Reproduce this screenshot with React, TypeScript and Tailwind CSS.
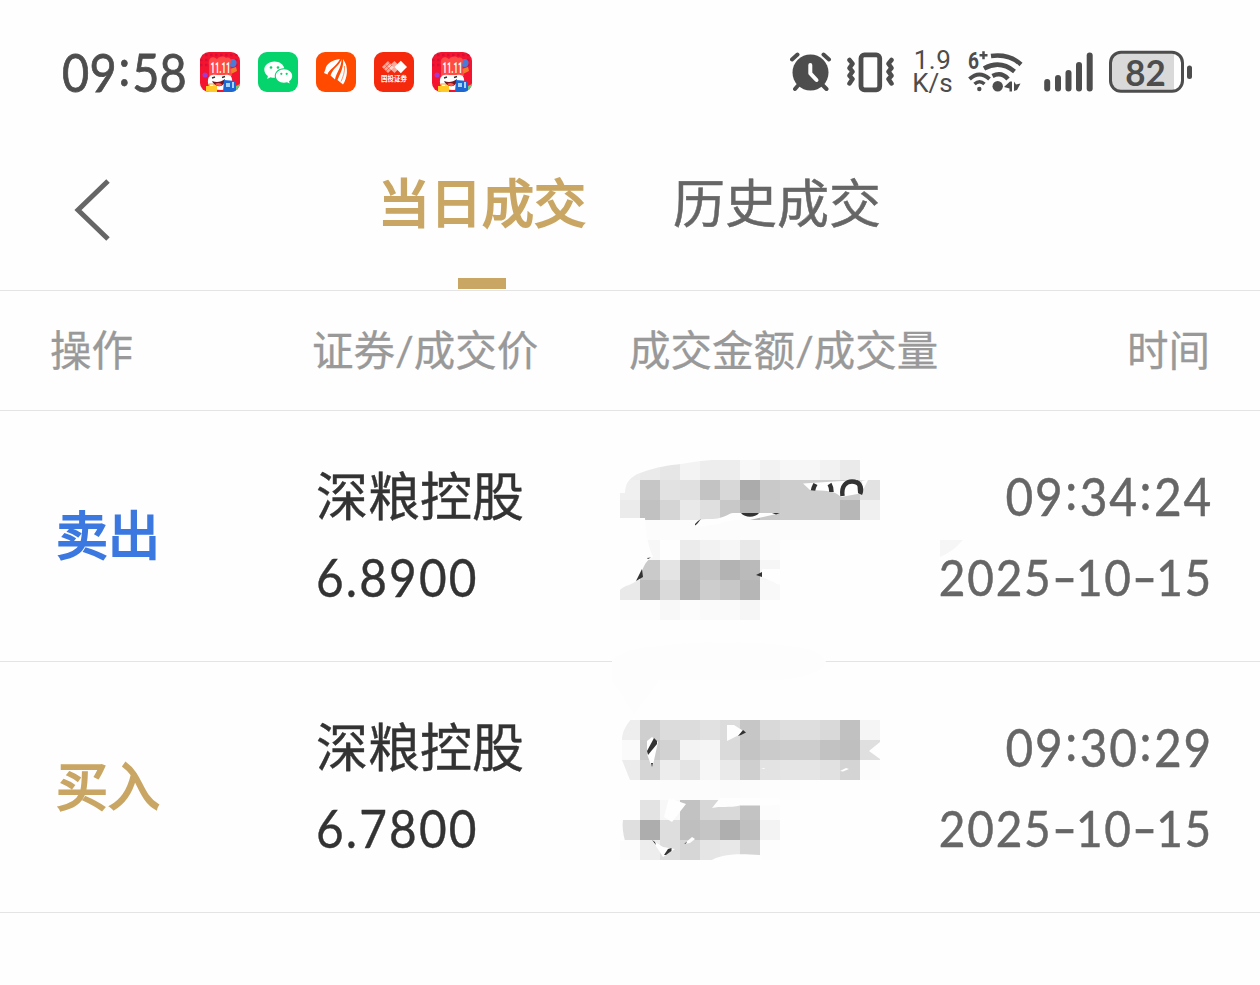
import React from 'react';

interface Trade {
  side: 'sell' | 'buy';
  label: string;
  stock: string;
  price: string;
  time: string;
  date: string;
}

const TRADES: Trade[] = [
  { side: 'sell', label: '卖出', stock: '深粮控股', price: '6.8900', time: '09:34:24', date: '2025-10-15' },
  { side: 'buy', label: '买入', stock: '深粮控股', price: '6.7800', time: '09:30:29', date: '2025-10-15' },
];

// Mosaic bands: top offset, first column x, then one grey level per 20px block
interface Band {
  y: number;
  x: number;
  levels: number[];
}

const SELL_BANDS: Band[] = [
  { y: 49, x: 20, levels: [237, 234, 230, 243, 237, 237, 248, 242, 247, 247, 242, 234] },
  { y: 69, x: 20, levels: [240, 198, 226, 224, 195, 216, 171, 201, 205, 205, 205, 205, 226] },
  { y: 89, x: 20, levels: [235, 193, 213, 233, 223, 200, 181, 202, 205, 205, 205, 183, 240] },
  { y: 109, x: 40, levels: [252, 252, 252, 252, 252, 252, 252, 252, 252, 252] },
  { y: 129, x: 40, levels: [247, 254, 235, 242, 246, 232, 252] },
  { y: 149, x: 20, levels: [254, 202, 228, 186, 197, 179, 186, 246] },
  { y: 169, x: 20, levels: [233, 190, 218, 182, 205, 199, 182, 249] },
  { y: 189, x: 20, levels: [253, 253, 248, 252, 250, 250, 246] },
];

const BUY_BANDS: Band[] = [
  { y: 58, x: 20, levels: [238, 207, 220, 220, 225, 220, 198, 217, 222, 222, 217, 193, 245] },
  { y: 78, x: 20, levels: [250, 201, 210, 243, 245, 218, 196, 203, 205, 205, 194, 191, 223] },
  { y: 98, x: 20, levels: [236, 213, 237, 228, 247, 234, 207, 227, 229, 229, 225, 212, 252] },
  { y: 118, x: 40, levels: [253, 252, 252, 252, 251, 252, 253, 253] },
  { y: 138, x: 40, levels: [227, 247, 194, 215, 217, 195, 252] },
  { y: 158, x: 20, levels: [223, 173, 222, 191, 197, 175, 191, 243] },
  { y: 178, x: 20, levels: [252, 237, 221, 214, 229, 232, 213, 253] },
];

const Mosaic: React.FC<{ bands: Band[] }> = ({ bands }) => (
  <g shapeRendering="crispEdges">
    {bands.map((band) =>
      band.levels.map((v, i) => (
        <rect key={`${band.y}-${i}`} x={band.x + i * 20} y={band.y} width="20" height="20" fill={`rgb(${v},${v},${v})`} />
      ))
    )}
  </g>
);

const SellAmount: React.FC = () => (
  <svg className="block h-[250px] w-[300px] shrink-0 overflow-visible" viewBox="0 0 300 250">
    <Mosaic bands={SELL_BANDS} />
    <g fill="#fefefe">
      <path d="M18 47H112V49C96 50 84 53 72 54C58 56 48 59 40 62C30 66 25 72 25 82H18Z" />
      <path d="M18 107H45C46 124 48 134 53 146C44 150 42 160 40 167C32 175 24 174 20 179H18Z" />
      <path d="M94 112C96 109 100 108 110 108C126 108 127 102 134 102H181L150 109C134 109 126 109 120 113L96 116Z" />
      <path d="M203 72.500L258 69L263 77V82L241 86C234 79 225 80 210 79Z" />
      <path d="M270 68H280V69L268 69L263 79L262 70Z" />
      <path d="M162 158H180V174L162 166Z" />
    </g>
    <g fill="none" stroke="#333" strokeWidth="4.5">
      <path d="M213 79.500C213.500 76 214.500 75 215.500 73M229.500 73C231 75.500 231.500 77 231.500 81" />
      <path d="M242.500 85C241 74 247 70.500 252 70.500C259 70.500 263 76 260 83" />
    </g>
    <g fill="#333">
      <path d="M257 69C262 70 264 78 262 83L258 82Z" />
      <path d="M95 113L98 110L101 108L97 113L95 114.500Z" />
      <path d="M141 102H159C155 107 145 107 141 102Z" />
      <path d="M172 102H180L176 103.500Z" />
      <path d="M36 170L42 158L43 166Z" />
      <path d="M47 147L51 146.500L48 148Z" />
      <path d="M156 164L162 161V166Z" />
    </g>
    <path d="M340 129H363C357 136 349 142 340 146Z" fill="#f6f6f6" />
  </svg>
);

const BuyAmount: React.FC = () => (
  <svg className="block h-[250px] w-[300px] shrink-0 overflow-visible" viewBox="0 0 300 250">
    {/* smudge that wipes part of the divider above the row */}
    <path d="M12 -2C22 -10 30 -12 42 -14C90 -22 160 -20 190 -16C215 -14 224 -6 226 0C224 10 206 15 180 18H60L34 52L12 18Z" fill="#fdfdfd" />
    <Mosaic bands={BUY_BANDS} />
    <g fill="#fefefe">
      <path d="M18 56H32C26 63 22 70 22 78V98L30 118H18Z" />
      <path d="M47 79L52 75L58 80L53 103H51L47 92Z" />
      <path d="M127 63H134L145 70L139 73L127 79Z" />
      <path d="M280 80L269 89L280 97Z" />
      <path d="M240 109L246 106L249 107L243 109.500Z" />
      <path d="M161 107L164 106L165 107Z" />
      <path d="M69 136L86 142L72 160L64 155Z" />
      <path d="M112 146L120 136H180V143L160 143.500H140C130 146 120 144 112 146Z" />
      <path d="M18 157H23C22 164 23 172 25 179H18Z" />
      <path d="M52 178L63 185L75 187L63 195Z" />
      <path d="M84 182L92 175L95 177L90 181Z" />
      <path d="M110 199C120 193 132 191 160 193H162V200H110Z" />
    </g>
    <g fill="#333">
      <path d="M47 89L54 76L57 79V82L48 93Z" />
      <path d="M51 101L53 101L52 105Z" />
      <path d="M138 74L143 68L146 70.500L141 73Z" />
      <path d="M52 178L55 180L56 183Z" />
      <path d="M64 193L68 187L71.500 186V189L66 193Z" />
      <path d="M84 182L87 179.500L86 181.500Z" />
    </g>
  </svg>
);

const SaleIcon: React.FC = () => (
  <svg className="h-10 w-10 rounded-[9px]" viewBox="0 0 40 40">
    <rect width="40" height="40" fill="#f5142f" />
    <path d="M0 3h40M0 8h40M0 13h40" stroke="#d40f38" strokeWidth="2.500" strokeDasharray="2.500 2.500" />
    <circle cx="32.500" cy="11" r="4" fill="#4b7bd8" />
    <path d="M30 17l6-2 1 4-6 3z" fill="#f0812c" />
    <circle cx="5" cy="23" r="2.500" fill="#a33ad0" />
    <path d="M9 13C8 6 12 3 17 7C20 4 24 4 26 6C31 4 32 9 30 13L32 24H9Z" fill="#ff4a45" />
    <path d="M8 28C9 21 15 23 20 23C26 23 31 21 32 27C33 32 30 38 21 38C11 38 7 33 8 28Z" fill="#fff" />
    <text x="20.500" y="20.500" textAnchor="middle" textLength="20" lengthAdjust="spacingAndGlyphs" fontFamily="Roboto, sans-serif" fontSize="14" fontWeight="700" fill="#fff">
      11.11
    </text>
    <path d="M12 26l3-1M22 25.500l3-1" stroke="#333" strokeWidth="1.500" fill="none" />
    <path d="M12 29C17 31 21 30 25 27C25 32 22 35 18 34C15 34 13 31 12 29Z" fill="#7b1420" />
    <path d="M15 32C18 30 21 31 22 32.500C20 35 17 34 15 32Z" fill="#ff5b4d" />
    <path d="M6 34h11v6H6z" fill="#ffc928" />
    <path d="M9 34v-2h5v2" stroke="#f2a51e" fill="none" />
    <path d="M24 28l12 1v11H23z" fill="#1d67d2" />
    <path d="M26 31h4v4h-4zM32 30h2v6h-2z" fill="#a8d4ff" />
    <path d="M36 34l4-2v8h-4z" fill="#71c67a" />
  </svg>
);

const WeChatIcon: React.FC = () => (
  <svg className="h-10 w-10 rounded-[9px]" viewBox="0 0 40 40">
    <rect width="40" height="40" fill="#05d36b" />
    <path d="M16.500 9.500C10.500 9.500 6.300 13.200 6.300 17.700C6.300 20.300 7.700 22.500 9.900 24L9.200 27L12.500 25.200C14 25.700 15.500 25.800 17 25.700C15.700 20.300 20.300 16 26.300 16.200C25.400 12.300 21.400 9.500 16.500 9.500Z" fill="#fff" />
    <path d="M26 17.300C21.300 17.300 17.800 20.300 17.800 24C17.800 27.700 21.300 30.700 26 30.700C27 30.700 28 30.500 29 30.200L31.700 31.600L31 29.200C33 28 34.200 26.100 34.200 24C34.200 20.300 30.700 17.300 26 17.300Z" fill="#fff" />
    <circle cx="13" cy="15.500" r="1.300" fill="#05d36b" />
    <circle cx="20" cy="15.500" r="1.300" fill="#05d36b" />
    <circle cx="23.300" cy="21.800" r="1.100" fill="#05d36b" />
    <circle cx="28.700" cy="21.800" r="1.100" fill="#05d36b" />
  </svg>
);

const FeatherIcon: React.FC = () => (
  <svg className="h-10 w-10 rounded-[9px]" viewBox="0 0 40 40">
    <rect width="40" height="40" fill="#ff4a00" />
    <g fill="#fff">
      <path d="M24 7C16 8 10 12 9.500 17L8 21L11.500 22.500C13 17 20 15 24 7Z" />
      <path d="M25.700 7C24 13 17 16 14.500 23.500L19 27.500C20 21 25 17 25.700 7Z" />
      <path d="M27 7C28 14 25 20 21.500 28L27 32.500C31 27 33.500 15 27 7Z" />
    </g>
    <path d="M28.500 14C29 20 27 25 25 29.500" stroke="#ff4a00" strokeWidth="0.600" fill="none" />
  </svg>
);

const BrokerIcon: React.FC = () => (
  <svg className="h-10 w-10 rounded-[9px]" viewBox="0 0 40 40">
    <rect width="40" height="40" fill="#f52a0c" />
    <path d="M8 15l6-6 6 6-6 6z" fill="#fff" fillOpacity="0.600" />
    <path d="M14 15l6.500-6 6 6-6 6z" fill="#fff" fillOpacity="0.600" />
    <path d="M10 17l6-6M12 19l6-6M14 9.500l5 5M11 12.500l6 6" stroke="#f52a0c" strokeWidth="0.500" />
    <path d="M20.500 15l6.300-6.300L33 15l-6.200 6.300z" fill="#fff" />
    <text x="20" y="28.500" textAnchor="middle" fontFamily="'Noto Sans CJK SC', sans-serif" fontSize="6.500" fontWeight="700" fill="#fff">
      国投证券
    </text>
    <path d="M8 30h24" stroke="#fff" strokeOpacity="0.500" strokeWidth="0.700" strokeDasharray="2 1" />
  </svg>
);

// Clock digits with the colon lifted to the middle of the line
const Clock: React.FC<{ value: string }> = ({ value }) => (
  <>
    {value.split(':').map((part, i) => (
      <React.Fragment key={i}>
        {i > 0 && <span className="relative -top-1.5 inline-block w-[17px] text-center">:</span>}
        {part}
      </React.Fragment>
    ))}
  </>
);

const DateText: React.FC<{ value: string }> = ({ value }) => (
  <>
    {value.split('-').map((part, i) => (
      <React.Fragment key={i}>
        {i > 0 && <span className="relative -top-px inline-block w-[26px] scale-x-[1.5] text-center tracking-normal">-</span>}
        {part}
      </React.Fragment>
    ))}
  </>
);

const StatusBar: React.FC = () => (
  <header className="flex h-36 items-center pr-[67px] pl-[62px] text-[#4d4d4d]">
    <div className="w-[138px] origin-left scale-x-90 font-[Lato,sans-serif] text-[52px] leading-none tracking-[0.3px] whitespace-nowrap [-webkit-text-stroke:0.8px_#4d4d4d]">
      <Clock value="09:58" />
    </div>
    <div className="flex gap-[18px]">
      <SaleIcon />
      <WeChatIcon />
      <FeatherIcon />
      <BrokerIcon />
      <SaleIcon />
    </div>

    <div className="ml-auto flex h-11 items-center">
      {/* Alarm */}
      <svg className="mr-[15px] h-11 w-[42px]" viewBox="0 0 42 44" fill="none" stroke="currentColor" strokeLinecap="round">
        <circle cx="20.500" cy="22.500" r="18" fill="currentColor" stroke="none" />
        <path d="M2 9.500L7.500 4.500M33.500 4.500L39 9.500M8 35.500L5 39M33 35.500L36.500 39" strokeWidth="4" />
        <path d="M20.300 15V23.300L26.500 30" stroke="#fefefe" strokeWidth="4" strokeLinejoin="round" />
      </svg>
      {/* Vibrate */}
      <svg className="mr-[18px] h-11 w-[47px]" viewBox="0 0 47 44" fill="none" stroke="currentColor" strokeLinecap="round" strokeLinejoin="round">
        <rect x="14" y="4.800" width="18.700" height="35" rx="3.500" strokeWidth="4.800" />
        <path d="M2.500 10L5.500 13.700L2.500 18L5.500 21.700L2.500 25.700L5.500 29L2.500 33.500" strokeWidth="4.500" />
        <path d="M44.500 10L41.500 13.700L44.500 18L41.500 21.700L44.500 25.700L41.500 29L44.500 33.500" strokeWidth="4.500" />
      </svg>
      <div className="mr-[14px] w-[41px] text-center font-[Roboto,sans-serif] text-[26px] leading-[23px]">
        <div className="tracking-[0.5px]">1.9</div>
        <div>K/s</div>
      </div>
      {/* Wi-Fi 6+ */}
      <svg className="mr-[21px] h-11 w-[56px]" viewBox="0 0 56 44" fill="none" stroke="currentColor" strokeLinecap="butt">
        <text x="1" y="19" fontFamily="Roboto, sans-serif" fontSize="23" fontWeight="700" fill="currentColor" stroke="none" textLength="11" lengthAdjust="spacingAndGlyphs">
          6
        </text>
        <path d="M12.500 5.300H20.500M16.500 1.300V9.300" strokeWidth="2.500" />
        <path d="M24 6Q42 3.500 54 14.500" strokeWidth="4.500" />
        <path d="M17 18.500Q33 9.500 47.500 21.500" strokeWidth="4.500" />
        <path d="M25.500 26Q34.500 21.500 41 29" strokeWidth="4.500" />
        <path d="M2.500 29Q12.300 20 22.500 29" strokeWidth="4" />
        <path d="M7.500 34Q12.500 29.500 17.500 34" strokeWidth="3.500" />
        <g fill="currentColor" stroke="none">
          <circle cx="12.300" cy="39" r="2.200" />
          <circle cx="30.700" cy="36.200" r="5.200" />
          <path d="M37 37L43 31.500H45V41.500H42.500V38.500ZM47 31.500L49 34.500L53.500 33.500L50 40L47 41Z" />
        </g>
      </svg>
      {/* Signal */}
      <svg className="mr-[16px] h-11 w-[49px]" viewBox="0 0 49 44" fill="currentColor">
        <rect x="0.200" y="29" width="6" height="12.500" rx="3" />
        <rect x="11" y="25" width="6" height="16.500" rx="3" />
        <rect x="21.500" y="20" width="6" height="21.500" rx="3" />
        <rect x="32" y="12" width="6" height="29.500" rx="3" />
        <rect x="42.700" y="2.500" width="6" height="39" rx="3" />
      </svg>
      {/* Battery */}
      <svg className="h-11 w-[84px]" viewBox="0 0 84 44">
        <path d="M12 2.300H65V41.300H12Q1.500 41.300 1.500 31V13Q1.500 2.300 12 2.300Z" fill="#d9d9d9" />
        <rect x="1.500" y="2.300" width="72" height="39" rx="10.500" fill="none" stroke="currentColor" strokeWidth="3" />
        <rect x="78" y="15.500" width="5" height="13.500" rx="2.500" fill="currentColor" />
        <text x="36.500" y="35.800" textAnchor="middle" textLength="40.500" lengthAdjust="spacingAndGlyphs" fontFamily="Lato, sans-serif" fontSize="37" fontWeight="700" fill="currentColor">
          82
        </text>
      </svg>
    </div>
  </header>
);

const App: React.FC = () => {
  return (
    <div className="h-[985px] w-[1260px] overflow-hidden bg-[#fefefe] font-['Noto_Sans_CJK_SC',sans-serif]">
      <StatusBar />

      <nav className="flex h-[147px] border-b border-[#e4e4e4] pl-[72px]">
        <button className="h-[132px] w-[306px]">
          <svg className="h-16 w-10" viewBox="0 0 40 64" fill="none" stroke="#666" strokeWidth="5">
            <path d="M36 3L6 32L36 61" />
          </svg>
        </button>
        <button className="flex w-[208px] flex-col items-center justify-between text-[52px] leading-[114px] text-[#c9a663] [-webkit-text-stroke:2px_#c9a663]">
          <span>当日成交</span>
          <span className="mb-px h-[11px] w-12 shrink-0 bg-[#c9a663]" />
        </button>
        <button className="ml-[87px] flex w-[208px] flex-col text-[52px] leading-[114px] text-[#666] [-webkit-text-stroke:0.5px_#666]">
          历史成交
        </button>
      </nav>

      <div className="flex h-[120px] items-center border-b border-[#e4e4e4] px-[50px] font-[Lato,'Noto_Sans_CJK_SC',sans-serif] text-[41.500px] leading-none text-[#999] [-webkit-text-stroke:0.3px_#999]">
        <div className="w-[262px]">操作</div>
        <div className="w-[317px]">证券/成交价</div>
        <div>成交金额/成交量</div>
        <div className="ml-auto">时间</div>
      </div>

      {TRADES.map((trade) => (
        <div key={trade.time} className="flex h-[251px] items-center border-b border-[#e4e4e4] pr-[47px] pl-14 leading-[81px]">
          <div
            className={`w-[260px] pb-[7px] text-[52px] ${
              trade.side === 'sell'
                ? 'text-[#3b78e0] [-webkit-text-stroke:2px_#3b78e0]'
                : 'text-[#c9a663] [-webkit-text-stroke:2px_#c9a663]'
            }`}
          >
            {trade.label}
          </div>
          <div className="w-[284px] text-[#333] [-webkit-text-stroke:0.4px_#333]">
            <div className="mb-1 text-[52px] leading-[77px]">{trade.stock}</div>
            <div className="origin-left scale-x-90 font-[Lato,sans-serif] text-[53px] tracking-[2.4px]">{trade.price}</div>
          </div>
          {trade.side === 'sell' ? <SellAmount /> : <BuyAmount />}
          <div className="flex flex-1 origin-right scale-x-90 flex-col items-end font-[Lato,sans-serif] tracking-[2px] whitespace-nowrap text-[#666] [-webkit-text-stroke:0.5px_#666]">
            <div className="text-[53px]">
              <Clock value={trade.time} />
            </div>
            <div className="text-[51px]">
              <DateText value={trade.date} />
            </div>
          </div>
        </div>
      ))}
    </div>
  );
};

export default App;
